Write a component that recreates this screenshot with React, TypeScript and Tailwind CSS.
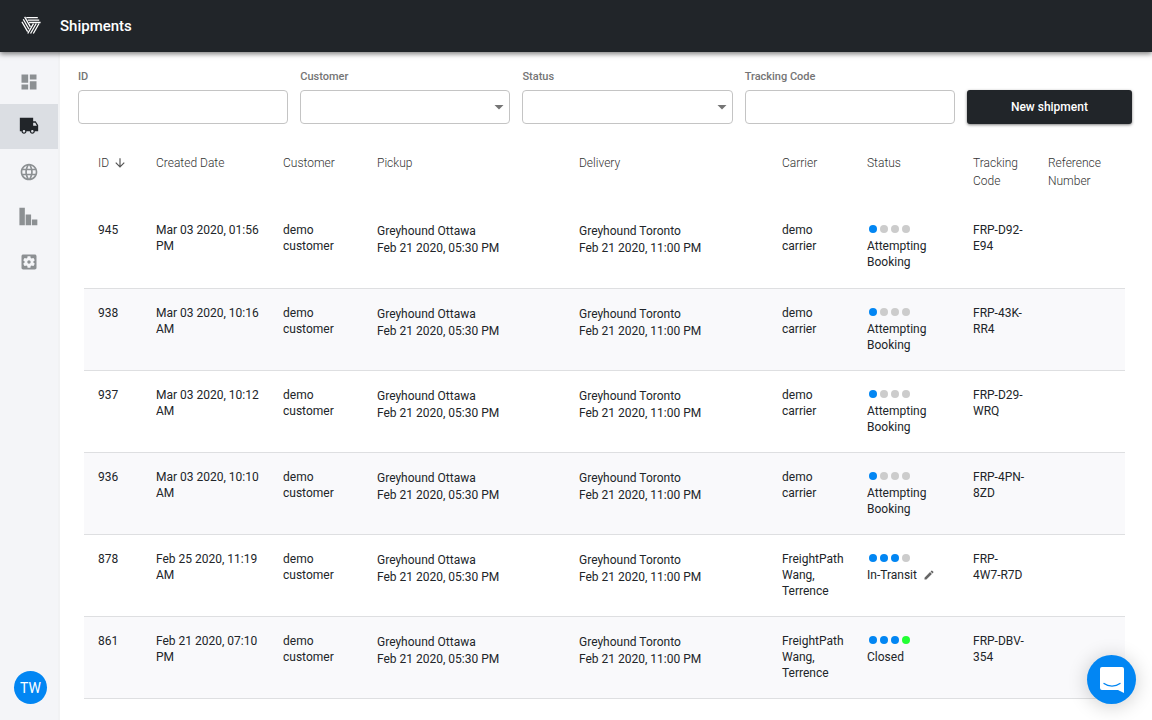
import React from "react";

type Shipment = {
  id: number;
  created: string;
  carrier: string;
  status: string;
  steps: number;
  code: string;
};

const shipments: Shipment[] = [
  { id: 945, created: "Mar 03 2020, 01:56\nPM", carrier: "demo carrier", status: "Attempting Booking", steps: 1, code: "FRP-D92-\nE94" },
  { id: 938, created: "Mar 03 2020, 10:16\nAM", carrier: "demo carrier", status: "Attempting Booking", steps: 1, code: "FRP-43K-\nRR4" },
  { id: 937, created: "Mar 03 2020, 10:12\nAM", carrier: "demo carrier", status: "Attempting Booking", steps: 1, code: "FRP-D29-\nWRQ" },
  { id: 936, created: "Mar 03 2020, 10:10\nAM", carrier: "demo carrier", status: "Attempting Booking", steps: 1, code: "FRP-4PN-\n8ZD" },
  { id: 878, created: "Feb 25 2020, 11:19\nAM", carrier: "FreightPath Wang, Terrence", status: "In-Transit", steps: 3, code: "FRP-\n4W7-R7D" },
  { id: 861, created: "Feb 21 2020, 07:10\nPM", carrier: "FreightPath Wang, Terrence", status: "Closed", steps: 4, code: "FRP-DBV-\n354" },
];

const navItems = [
  { label: "Dashboard", path: "M3 13h8V3H3v10zm0 8h8v-6H3v6zm10 0h8V11h-8v10zm0-18v6h8V3h-8z", active: false },
  { label: "Shipments", path: "M20 5h-3V1H1v16h2c0 1.660 1.340 3 3 3s3-1.340 3-3h4c0 1.660 1.340 3 3 3s3-1.340 3-3h4v-7l-3-5zM6 18.500c-.83 0-1.500-.67-1.500-1.500s.67-1.500 1.500-1.500 1.500.67 1.500 1.500-.67 1.500-1.500 1.500zM19.500 7l2 3.500H17V7h2.500zM16 18.500c-.83 0-1.500-.67-1.500-1.500s.67-1.500 1.500-1.500 1.500.67 1.500 1.500-.67 1.500-1.500 1.500z", active: true },
  { label: "Network", path: "M11.990 2C6.470 2 2 6.480 2 12s4.470 10 9.990 10C17.520 22 22 17.520 22 12S17.520 2 11.990 2zm6.930 6h-2.950c-.32-1.250-.78-2.450-1.380-3.560 1.840.63 3.370 1.910 4.330 3.560zM12 4.040c.83 1.200 1.480 2.530 1.910 3.960h-3.820c.43-1.430 1.080-2.760 1.910-3.960zM4.260 14C4.100 13.360 4 12.690 4 12s.1-1.360.26-2h3.380c-.08.66-.14 1.320-.14 2s.06 1.340.14 2H4.260zm.82 2h2.950c.32 1.250.78 2.450 1.380 3.560-1.840-.63-3.370-1.900-4.330-3.560zm2.950-8H5.080c.96-1.660 2.490-2.930 4.330-3.560C8.810 5.550 8.350 6.750 8.030 8zM12 19.960c-.83-1.200-1.480-2.530-1.910-3.960h3.820c-.43 1.430-1.080 2.760-1.910 3.960zM14.340 14H9.660c-.09-.66-.16-1.320-.16-2s.07-1.350.16-2h4.680c.09.65.16 1.320.16 2s-.07 1.340-.16 2zm.25 5.560c.6-1.110 1.060-2.310 1.380-3.560h2.950c-.96 1.650-2.490 2.930-4.330 3.560zM16.360 14c.08-.66.14-1.320.14-2s-.06-1.340-.14-2h3.380c.16.64.26 1.310.26 2s-.1 1.360-.26 2h-3.380z", active: false },
  { label: "Reports", path: "M0.500 1h6.500v21h-6.500zM8 9h6.500v13H8zM15.500 15h6.500v7h-6.500z", active: false },
  { label: "Settings", path: "M12 10c-1.100 0-2 .9-2 2s.9 2 2 2 2-.9 2-2-.9-2-2-2zm7-7H5c-1.110 0-2 .9-2 2v14c0 1.100.89 2 2 2h14c1.110 0 2-.9 2-2V5c0-1.100-.89-2-2-2zm-1.750 9c0 .23-.02.46-.05.68l1.480 1.160c.13.11.17.3.08.45l-1.400 2.420c-.09.15-.27.21-.43.15l-1.740-.7c-.36.28-.76.51-1.180.69l-.26 1.850c-.03.17-.18.3-.35.3h-2.800c-.17 0-.32-.13-.35-.29l-.26-1.850c-.43-.18-.82-.41-1.180-.69l-1.740.7c-.16.06-.34 0-.43-.15l-1.400-2.420c-.09-.15-.05-.34.08-.45l1.480-1.160c-.03-.23-.05-.46-.05-.69 0-.23.02-.46.05-.68l-1.480-1.160c-.13-.11-.17-.3-.08-.45l1.400-2.420c.09-.15.27-.21.43-.15l1.740.7c.36-.28.76-.51 1.180-.69l.26-1.850c.03-.17.18-.3.35-.3h2.800c.17 0 .32.13.35.29l.26 1.850c.43.18.82.41 1.180.69l1.740-.7c.16-.06.34 0 .43.15l1.400 2.420c.09.15.05.34-.08.45l-1.480 1.160c.03.23.05.46.05.69z", active: false },
];

/* Three interlocking arms, each made of three parallel strips. */
function Logo() {
  return (
    <svg viewBox="0 0 20 18" className="h-[18px] w-5 overflow-visible" fill="none" stroke="#fff" strokeWidth="1.300" aria-hidden="true">
      {[0, 120, 240].map((angle) => (
        <g key={angle} transform={`rotate(${angle} 10 7.300)`}>
          <path d="M5.300 0.700H16.800M6.700 3.100H18.200M8.100 5.500H19.600" />
        </g>
      ))}
    </svg>
  );
}

function Field({ id, label, select }: { id: string; label: string; select?: boolean }) {
  const box = "block h-[34px] w-full rounded border border-[#c4c4c4] bg-white px-3 text-xs outline-none";
  return (
    <div className="flex min-w-0 flex-col gap-[5px]">
      <label htmlFor={id} className="text-[11px] leading-4 font-medium text-[#757575]">{label}</label>
      {select ? (
        <div className="relative">
          <select id={id} className={`${box} appearance-none`}>
            <option value=""></option>
          </select>
          <svg viewBox="0 0 10 5" className="pointer-events-none absolute top-[15px] right-[6px] h-[5px] w-[10px]" fill="#757575" aria-hidden="true">
            <path d="M0.500 0h9L5 4.500z" />
          </svg>
        </div>
      ) : (
        <input id={id} type="text" className={box} />
      )}
    </div>
  );
}

function Steps({ count }: { count: number }) {
  return (
    <div className="flex h-4 items-start gap-[3px] pt-[3px] pl-[2px]">
      {[1, 2, 3, 4].map((n) => (
        <span
          key={n}
          className={`size-2 rounded-full ${n > count ? "bg-[#ccc]" : n === 4 ? "bg-[#2f3]" : "bg-[#0286f3]"}`}
        />
      ))}
    </div>
  );
}

export default function App() {
  const cell = "pr-2 pl-[14px] pt-4 align-top";
  const stop = "pr-2 pl-[14px] pt-[17px] align-top leading-[17px]";
  return (
    <div className="flex min-h-screen flex-col bg-white font-[Roboto,sans-serif] text-[#212529]">
      <header className="relative z-10 flex h-[52px] items-center gap-[19px] bg-[#212529] px-[21px] shadow-[0_2px_5px_rgba(0,0,0,0.5)]">
        <Logo />
        <h1 className="text-[15px] leading-5 font-medium text-white">Shipments</h1>
      </header>
      <div className="flex flex-1">
        <aside className="flex w-[60px] shrink-0 flex-col justify-between border-r-2 border-[#f1f2f4] bg-[#f4f5f8] pt-[7px] pb-4">
          <nav className="flex flex-col">
            {navItems.map((item) => (
              <a
                key={item.label}
                href="#"
                aria-label={item.label}
                className={`flex h-[45px] items-center justify-center ${item.active ? "bg-[#dbdee3] text-[#212529]" : "text-[#8c9093]"}`}
              >
                <svg viewBox="0 0 24 24" className="size-5" fill="currentColor" fillRule="evenodd" aria-hidden="true">
                  <path d={item.path} />
                </svg>
              </a>
            ))}
          </nav>
          <button type="button" className="ml-[14px] size-[33px] rounded-full bg-[#0286f3] text-sm text-white">TW</button>
        </aside>
        <main className="min-w-0 flex-1 pt-[17px] pr-5 pl-[18px]">
          <form className="grid grid-cols-[210fr_210fr_210fr_210fr_165fr] items-end gap-3">
            <Field id="shipment-id" label="ID" />
            <Field id="customer" label="Customer" select />
            <Field id="status" label="Status" select />
            <Field id="tracking" label="Tracking Code" />
            <button type="button" className="h-[34px] rounded-[3px] bg-[#212529] text-xs font-medium text-white shadow-[0_1px_3px_rgba(0,0,0,0.5)]">
              New shipment
            </button>
          </form>
          <div className="pt-[14px] pr-[7px] pl-[6px]">
            <table className="w-full table-fixed border-collapse text-left text-xs leading-4">
              <colgroup>
                <col className="w-[58px]" />
                <col className="w-[127px]" />
                <col className="w-[94px]" />
                <col className="w-[202px]" />
                <col className="w-[203px]" />
                <col className="w-[85px]" />
                <col className="w-[106px]" />
                <col className="w-[75px]" />
                <col className="w-[91px]" />
              </colgroup>
              <thead className="leading-[18px] text-[#333]">
                <tr className="h-[68px]">
                  <th className={`${cell} font-light`}>
                    <span className="flex items-center gap-1">
                      ID
                      <svg viewBox="0 0 24 24" className="size-[14px]" fill="#555" aria-hidden="true">
                        <path d="M20 12l-1.410-1.410L13 16.170V4h-2v12.170l-5.580-5.590L4 12l8 8 8-8z" />
                      </svg>
                    </span>
                  </th>
                  {["Created Date", "Customer", "Pickup", "Delivery", "Carrier", "Status", "Tracking Code", "Reference Number"].map((h) => (
                    <th key={h} className={`${cell} font-light`}>{h}</th>
                  ))}
                </tr>
              </thead>
              <tbody>
                {shipments.map((s) => (
                  <tr key={s.id} className="h-[82px] border-b border-[#dedfe1] even:bg-[#f9f9fb]">
                    <td className={cell}>{s.id}</td>
                    <td className={`${cell} whitespace-pre`}>{s.created}</td>
                    <td className={cell}>demo customer</td>
                    <td className={stop}>Greyhound Ottawa<br />Feb 21 2020, 05:30 PM</td>
                    <td className={stop}>Greyhound Toronto<br />Feb 21 2020, 11:00 PM</td>
                    <td className={cell}>{s.carrier}</td>
                    <td className={cell}>
                      <Steps count={s.steps} />
                      <span className="flex items-center gap-[6px]">
                        {s.status}
                        {s.status === "In-Transit" && (
                          <button type="button" aria-label="Edit status">
                            <svg viewBox="0 0 24 24" className="size-3" fill="#666" aria-hidden="true">
                              <path d="M3 17.250V21h3.750L17.810 9.940l-3.750-3.750L3 17.250zM20.710 7.040c.39-.39.39-1.020 0-1.410l-2.340-2.340c-.39-.39-1.020-.39-1.410 0l-1.830 1.830 3.750 3.750 1.830-1.830z" />
                            </svg>
                          </button>
                        )}
                      </span>
                    </td>
                    <td className={`${cell} whitespace-pre`}>{s.code}</td>
                    <td className={cell}></td>
                  </tr>
                ))}
              </tbody>
            </table>
          </div>
        </main>
      </div>
      <button
        type="button"
        aria-label="Open chat"
        className="fixed right-4 bottom-4 flex size-[49px] items-center justify-center rounded-full bg-[#0286f3] shadow-[0_2px_20px_rgba(0,0,0,0.2)]"
      >
        <svg viewBox="0 0 24 26" className="h-[26px] w-6" aria-hidden="true">
          <path d="M2 0h20a2 2 0 0 1 2 2v24l-6-3H2a2 2 0 0 1-2-2V2a2 2 0 0 1 2-2z" fill="#fff" />
          <path d="M4 16.500c4.500 3.400 11.500 3.400 16 0" fill="none" stroke="#0286f3" strokeWidth="1.300" strokeLinecap="round" />
        </svg>
      </button>
    </div>
  );
}
